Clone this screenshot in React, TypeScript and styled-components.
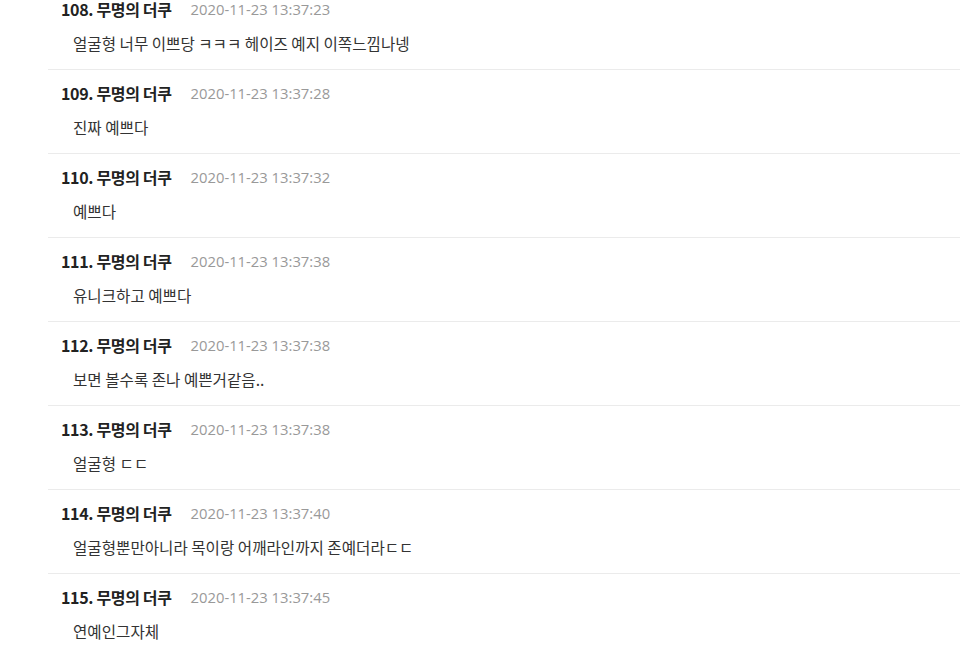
import styled, { createGlobalStyle } from 'styled-components';

const GlobalStyle = createGlobalStyle`
  html, body {
    margin: 0;
    padding: 0;
    background: #fff;
    font-family: "Noto Sans CJK KR", "Noto Sans", sans-serif;
    overflow: hidden;
  }
`;

const comments = [
  { no: 108, time: '2020-11-23 13:37:23', text: '얼굴형 너무 이쁘당 ㅋㅋㅋ 헤이즈 예지 이쪽느낌나넹' },
  { no: 109, time: '2020-11-23 13:37:28', text: '진짜 예쁘다' },
  { no: 110, time: '2020-11-23 13:37:32', text: '예쁘다' },
  { no: 111, time: '2020-11-23 13:37:38', text: '유니크하고 예쁘다' },
  { no: 112, time: '2020-11-23 13:37:38', text: '보면 볼수록 존나 예쁜거같음..' },
  { no: 113, time: '2020-11-23 13:37:38', text: '얼굴형 ㄷㄷ' },
  { no: 114, time: '2020-11-23 13:37:40', text: '얼굴형뿐만아니라 목이랑 어깨라인까지 존예더라ㄷㄷ' },
  { no: 115, time: '2020-11-23 13:37:45', text: '연예인그자체' },
];

const App = () => {
  return (
    <>
      <GlobalStyle />
      <CommentList>
        {comments.map((c) => (
          <CommentItem key={c.no}>
            <Header>
              <Author>{c.no}. 무명의 더쿠</Author>
              <Time>{c.time}</Time>
            </Header>
            <Body>{c.text}</Body>
          </CommentItem>
        ))}
      </CommentList>
    </>
  );
};

export default App;

// list is scrolled part-way, so the first comment sits slightly above the fold
const CommentList = styled.ul`
  list-style: none;
  margin: -14px 0 0 48px;
  padding: 0;
`;

const CommentItem = styled.li`
  padding: 14px 13px 16px;
  border-bottom: 1px solid #ebebeb;
`;

const Header = styled.div`
  display: flex;
  align-items: center;
  gap: 19px;
  height: 18px;
  line-height: 18px;
`;

const Author = styled.span`
  font-size: 16px;
  font-weight: 700;
  color: #222;
  letter-spacing: -0.35px;
`;

const Time = styled.span`
  font-family: "Open Sans", "Noto Sans CJK KR", sans-serif;
  font-size: 14.8px;
  color: #999;
`;

const Body = styled.p`
  margin: 15px 0 0 12px;
  font-size: 15.6px;
  line-height: 20px;
  color: #333;
`;
